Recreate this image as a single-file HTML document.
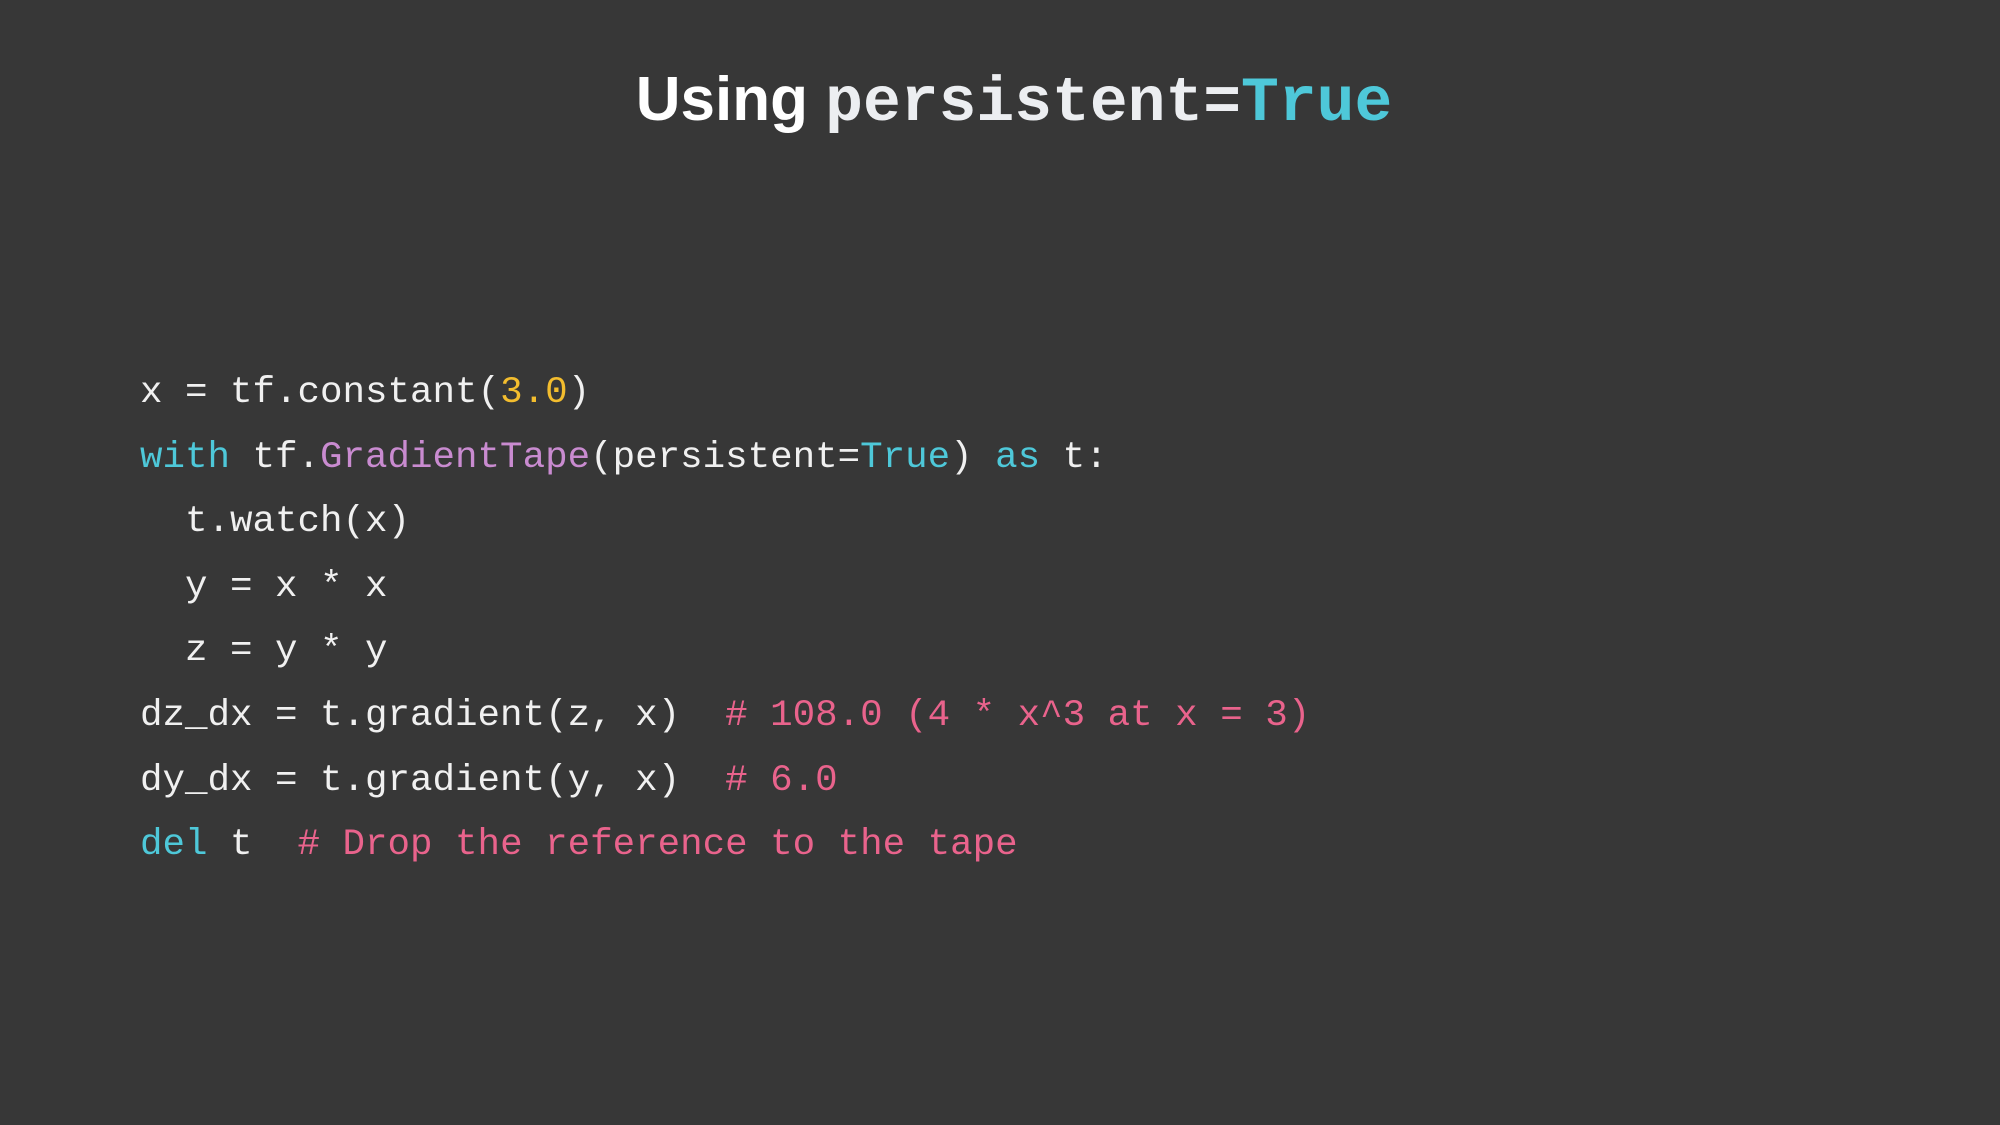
<!DOCTYPE html>
<html><head><style>
html,body{margin:0;padding:0;background:#373737;width:2000px;height:1125px;overflow:hidden}
.t{position:absolute;top:64px;left:14px;width:2000px;text-align:center;font-size:62px;font-weight:bold;color:#fff;font-family:"Liberation Sans",sans-serif;white-space:nowrap}
.t .m{font-family:"Liberation Mono",monospace;color:#eceef1;font-size:63px}
.t .m.k{color:#4ec8d9}
.c{position:absolute;left:140px;top:361px;font-family:"Liberation Mono",monospace;font-size:37.5px;line-height:64.6px;color:#f0f0f0;white-space:pre;margin:0}
.k{color:#4ec8d9}.p{color:#c98bd0}.o{color:#f3bd2e}.r{color:#e9638c}
</style></head><body>
<div class="t">Using <span class="m">persistent=</span><span class="m k">True</span></div>
<pre class="c">x = tf.constant(<span class="o">3.0</span>)
<span class="k">with</span> tf.<span class="p">GradientTape</span>(persistent=<span class="k">True</span>) <span class="k">as</span> t:
  t.watch(x)
  y = x * x
  z = y * y
dz_dx = t.gradient(z, x)  <span class="r"># 108.0 (4 * x^3 at x = 3)</span>
dy_dx = t.gradient(y, x)  <span class="r"># 6.0</span>
<span class="k">del</span> t  <span class="r"># Drop the reference to the tape</span></pre>
</body></html>
